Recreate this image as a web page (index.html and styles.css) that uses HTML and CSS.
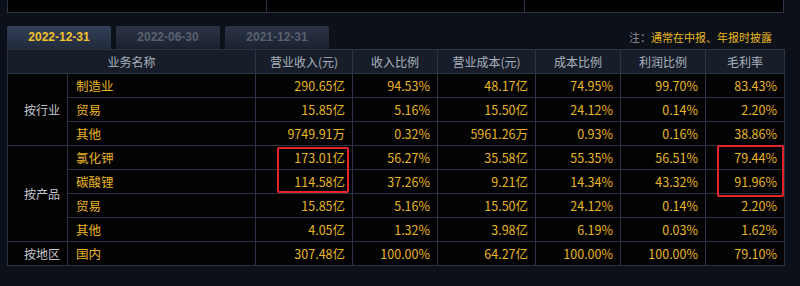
FILE: index.html
```html
<!DOCTYPE html>
<html lang="zh-CN">
<head>
<meta charset="utf-8">
<link rel="stylesheet" href="styles.css">
</head>
<body>
<div class="page">
  <div class="top-panel">
    <div class="tp-cell c1"></div>
    <div class="tp-cell c2"></div>
    <div class="tp-cell c3"></div>
  </div>
  <div class="tabbar">
    <div class="tabs">
      <div class="tab active">2022-12-31</div>
      <div class="tab">2022-06-30</div>
      <div class="tab">2021-12-31</div>
    </div>
    <div class="note"><span class="note-label">注：</span><span class="note-text">通常在中报、年报时披露</span></div>
  </div>
  <div class="table-wrap">
    <table class="data">
      <colgroup>
        <col class="w-cat"><col class="w-name"><col class="w-rev"><col class="w-rr"><col class="w-cost"><col class="w-cr"><col class="w-pr"><col class="w-gm">
      </colgroup>
      <thead>
        <tr><th colspan="2">业务名称</th><th>营业收入(元)</th><th>收入比例</th><th>营业成本(元)</th><th>成本比例</th><th>利润比例</th><th>毛利率</th></tr>
      </thead>
      <tbody>
        <tr><td class="cat" rowspan="3">按行业</td><td class="name">制造业</td><td>290.65亿</td><td>94.53%</td><td>48.17亿</td><td>74.95%</td><td>99.70%</td><td>83.43%</td></tr>
        <tr><td class="name">贸易</td><td>15.85亿</td><td>5.16%</td><td>15.50亿</td><td>24.12%</td><td>0.14%</td><td>2.20%</td></tr>
        <tr><td class="name">其他</td><td>9749.91万</td><td>0.32%</td><td>5961.26万</td><td>0.93%</td><td>0.16%</td><td>38.86%</td></tr>
        <tr><td class="cat" rowspan="4">按产品</td><td class="name">氯化钾</td><td>173.01亿</td><td>56.27%</td><td>35.58亿</td><td>55.35%</td><td>56.51%</td><td>79.44%</td></tr>
        <tr><td class="name">碳酸锂</td><td>114.58亿</td><td>37.26%</td><td>9.21亿</td><td>14.34%</td><td>43.32%</td><td>91.96%</td></tr>
        <tr><td class="name">贸易</td><td>15.85亿</td><td>5.16%</td><td>15.50亿</td><td>24.12%</td><td>0.14%</td><td>2.20%</td></tr>
        <tr><td class="name">其他</td><td>4.05亿</td><td>1.32%</td><td>3.98亿</td><td>6.19%</td><td>0.03%</td><td>1.62%</td></tr>
        <tr><td class="cat">按地区</td><td class="name">国内</td><td>307.48亿</td><td>100.00%</td><td>64.27亿</td><td>100.00%</td><td>100.00%</td><td>79.10%</td></tr>
      </tbody>
    </table>
    <div class="mark mark-rev"></div>
    <div class="mark mark-gm"></div>
  </div>
</div>
</body>
</html>
```

FILE: styles.css
```css
html, body {
  margin: 0;
  padding: 0;
  background: #0c1018;
}
body {
  font-family: "Noto Sans CJK SC", "Noto Sans", sans-serif;
  font-size: 12px;
  width: 800px;
  height: 286px;
  overflow: hidden;
}
.page {
  padding-left: 7px;
  width: 777px;
}
.top-panel {
  display: flex;
  height: 12px;
  border: 1px solid #2d3646;
  border-top: none;
  background: #000;
}
.tp-cell { height: 100%; }
.c1 { width: 258px; border-right: 1px solid #2d3646; }
.c2 { width: 257px; border-right: 1px solid #2d3646; }
.c3 { flex: 1; }
.tabbar {
  display: flex;
  justify-content: space-between;
  align-items: flex-end;
  margin-top: 13px;
  height: 23px;
}
.tabs {
  display: flex;
  gap: 5px;
  height: 23px;
}
.tab {
  width: 104px;
  height: 23px;
  line-height: 23px;
  text-align: center;
  font-family: "Liberation Sans", Arial, sans-serif;
  font-weight: bold;
  font-size: 12px;
  color: #596170;
  background: linear-gradient(#2b3446, #1b2130);
  border-radius: 2px 2px 0 0;
}
.tab.active {
  color: #f0c22c;
  background: linear-gradient(#33405a, #222a3b);
}
.note {
  align-self: center;
  margin-right: 12px;
  font-size: 11px;
  padding-bottom: 2px;
}
.note-label { color: #8b929e; }
.note-text { color: #e8b81e; }
.table-wrap {
  position: relative;
}
table.data {
  border-collapse: collapse;
  width: 777px;
  table-layout: fixed;
  background: #030303;
}
.w-cat { width: 60px; }
.w-name { width: 188px; }
.w-rev { width: 97px; }
.w-rr { width: 85px; }
.w-cost { width: 98px; }
.w-cr { width: 85px; }
.w-pr { width: 85px; }
.w-gm { width: 79px; }
table.data th, table.data td {
  border: 1px solid #2b3444;
  height: 24px;
  padding: 0 7px;
  box-sizing: border-box;
  white-space: nowrap;
}
table.data th {
  background: #171e2a;
  color: #aab2be;
  font-weight: normal;
  text-align: center;
  font-size: 12px;
}
table.data td {
  color: #e9b526;
  text-align: right;
  font-size: 12.5px;
}
table.data td.cat {
  color: #c4c8ce;
  text-align: right;
  font-size: 12px;
  padding: 0 7px 0 0;
}
table.data td.name {
  text-align: left;
  padding-left: 8px;
  font-size: 12.5px;
}
.mark {
  position: absolute;
  border: 2px solid #e3242b;
  border-radius: 2px;
  box-sizing: border-box;
}
.mark-rev {
  left: 270px;
  top: 98px;
  width: 72px;
  height: 46px;
}
.mark-gm {
  left: 710px;
  top: 96px;
  width: 67px;
  height: 52px;
}
```
